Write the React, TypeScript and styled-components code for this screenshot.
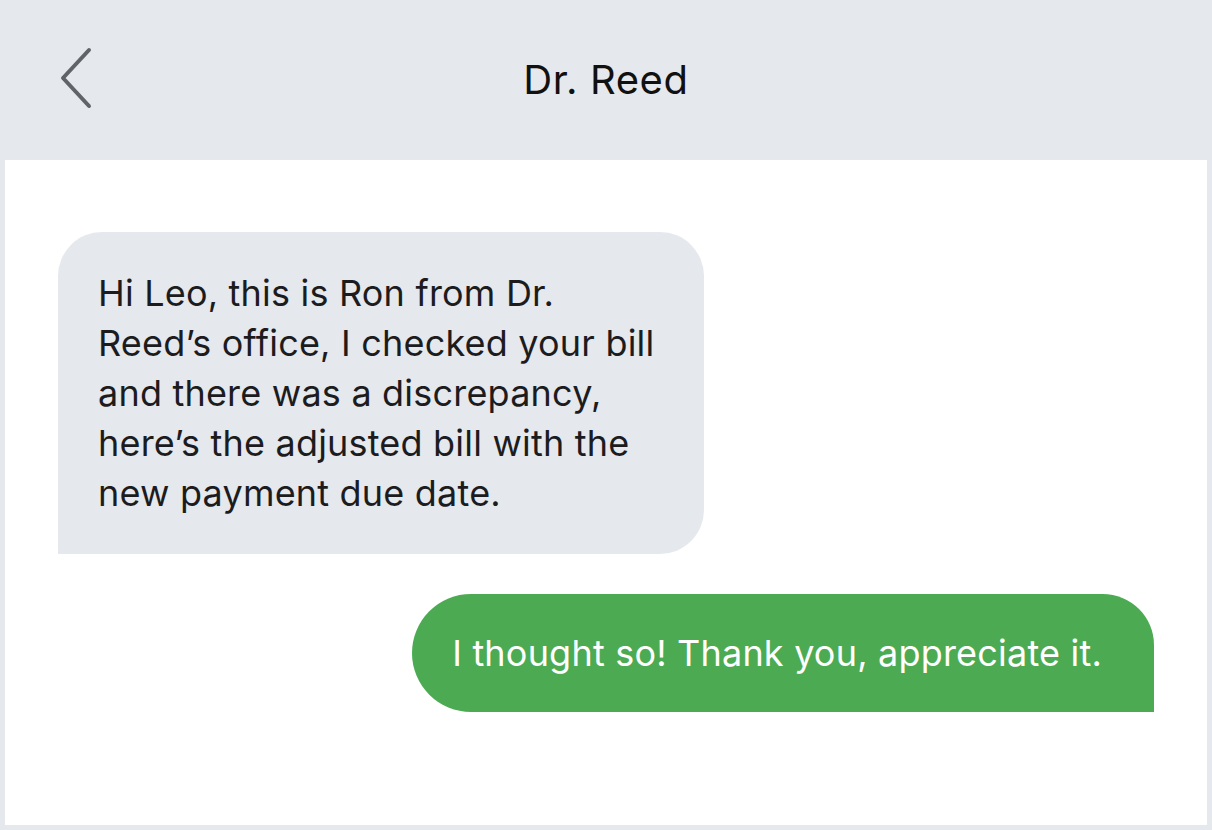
import React from 'react';
import styled, { createGlobalStyle } from 'styled-components';

const GlobalStyle = createGlobalStyle`
  html, body {
    margin: 0;
    padding: 0;
    background: #e5e8ed;
  }
  body {
    font-family: Inter, "Noto Sans", "Liberation Sans", sans-serif;
  }
`;

const Screen = styled.div`
  width: 1212px;
  height: 830px;
  display: flex;
  flex-direction: column;
  background: #e5e8ed;
  padding: 0 5px 5px;
  box-sizing: border-box;
`;

const Header = styled.header`
  height: 160px;
  flex: none;
  display: grid;
  grid-template-columns: 120px 1fr 120px;
  align-items: center;
  margin: 0 -5px;
`;

const BackButton = styled.button`
  border: none;
  background: none;
  padding: 0;
  margin-left: 54px;
  width: 44px;
  height: 66px;
  display: flex;
  align-items: center;
  justify-content: center;
  cursor: pointer;
  margin-top: -4px;
`;

const Title = styled.h1`
  margin: 0;
  text-align: center;
  font-size: 40px;
  font-weight: 400;
  color: #111;
  letter-spacing: 0.6px;
  margin-top: -2px;
`;

const Thread = styled.main`
  flex: 1;
  background: #fff;
  display: flex;
  flex-direction: column;
  padding: 72px 53px 0 53px;
  gap: 40px;
`;

const Bubble = styled.div<{ mine?: boolean }>`
  align-self: ${({ mine }) => (mine ? 'flex-end' : 'flex-start')};
  background: ${({ mine }) => (mine ? '#4cab52' : '#e5e8ed')};
  color: ${({ mine }) => (mine ? '#fff' : '#1c1c1e')};
  font-size: 36px;
  line-height: 50px;
  letter-spacing: 0.2px;
  border-radius: ${({ mine }) => (mine ? '60px 52px 0 60px' : '44px 44px 44px 0')};
  padding: ${({ mine }) => (mine ? '34px 52px 34px 40px' : '36px 40px 36px 40px')};
  width: ${({ mine }) => (mine ? 'auto' : '566px')};
`;

const Chevron = () => (
  <svg width="34" height="62" viewBox="0 0 34 62" fill="none">
    <path
      d="M30 3 L4 31 L30 59"
      stroke="#606368"
      strokeWidth="4"
      strokeLinecap="round"
      strokeLinejoin="round"
    />
  </svg>
);

export default function App() {
  return (
    <>
      <GlobalStyle />
      <Screen>
        <Header>
          <BackButton aria-label="Back">
            <Chevron />
          </BackButton>
          <Title>Dr. Reed</Title>
          <div />
        </Header>
        <Thread>
          <Bubble>
            Hi Leo, this is Ron from Dr. Reed’s office, I checked your bill and there was a
            discrepancy, here’s the adjusted bill with the new payment due date.
          </Bubble>
          <Bubble mine>I thought so! Thank you, appreciate it.</Bubble>
        </Thread>
      </Screen>
    </>
  );
}
